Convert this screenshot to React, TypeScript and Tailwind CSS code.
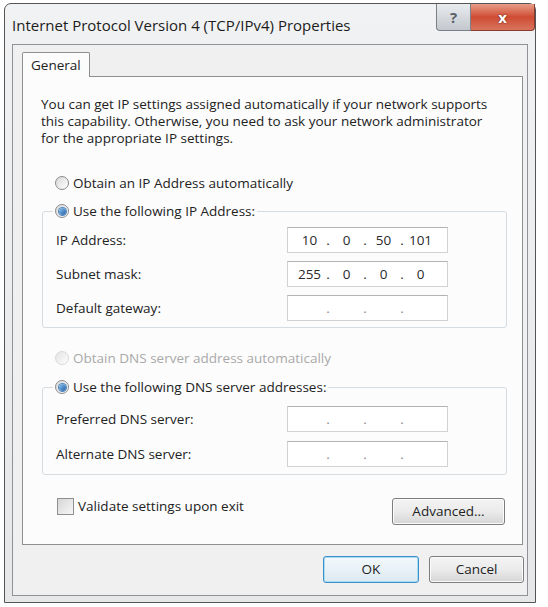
import type { ReactNode } from "react";

const font = { fontFamily: '"Open Sans", "Noto Sans", sans-serif' };

function Radio({ checked = false, disabled = false }: { checked?: boolean; disabled?: boolean }) {
  return (
    <span
      className={`flex h-[14px] w-[14px] shrink-0 items-center justify-center rounded-full border bg-gradient-to-br from-[#d9d9d9] to-[#ffffff] ${
        disabled ? "border-[#cbcbcb] opacity-70" : "border-[#8a8a8a]"
      }`}
    >
      {checked && (
        <span className="h-[7px] w-[7px] rounded-full bg-gradient-to-br from-[#8fc4ee] to-[#1d5fa6] shadow-[0_0_0_1px_#4f86bd]" />
      )}
    </span>
  );
}

function IpField({ values }: { values: string[] }) {
  const empty = values.every((v) => v === "");
  return (
    <div className="flex h-[26px] w-[161px] items-center border border-[#d2d2d2] border-t-[#b3b3b3] bg-white pl-[5px] text-[13.5px] text-[#2a2a2a]">
      {values.map((v, i) => (
        <div key={i} className="flex items-center">
          <span className="w-[33px] text-center">{v}</span>
          {i < 3 && (
            <span className={`w-[4px] text-center ${empty ? "text-[#8a8a8a]" : ""}`}>.</span>
          )}
        </div>
      ))}
    </div>
  );
}

function Row({ label, values }: { label: string; values: string[] }) {
  return (
    <div className="flex items-center">
      <span className="w-[244px] pl-[13px] text-[13.5px] text-[#222]">{label}</span>
      <IpField values={values} />
    </div>
  );
}

function Group({ legend, children }: { legend: ReactNode; children: ReactNode }) {
  return (
    <fieldset className="ml-[19px] w-[465px] rounded-[3px] border border-[#d5dce2]">
      <legend className="ml-[10px] px-[2px]">{legend}</legend>
      {children}
    </fieldset>
  );
}

function Btn({ children, primary = false, className = "" }: { children: ReactNode; primary?: boolean; className?: string }) {
  return (
    <button
      className={`flex h-[27px] items-center justify-center rounded-[3px] border text-[13.5px] text-[#222] ${
        primary
          ? "border-[#3d8fc8] bg-gradient-to-b from-[#f3f9fc] to-[#dce9f1] shadow-[inset_0_0_0_1px_#a9dcf5]"
          : "border-[#7d7d7d] bg-gradient-to-b from-[#f4f4f4] via-[#ebebeb] to-[#d5d5d5] shadow-[inset_0_0_0_1px_#fbfbfb]"
      } ${className}`}
    >
      {children}
    </button>
  );
}

export default function App() {
  return (
    <div className="h-[607px] w-[548px] bg-white pl-[4px] pt-[3px]" style={font}>
      <div className="flex h-[600px] w-[532px] flex-col rounded-t-[7px] border border-[#555] bg-gradient-to-b from-[#f1f2f3] to-[#e6e7e8]">
        {/* title bar */}
        <div className="flex h-[40px] items-start">
          <span className="mt-[11px] flex-1 pl-[7px] text-[15px] leading-[20px] text-[#1c1c1c]">
            Internet Protocol Version 4 (TCP/IPv4) Properties
          </span>
          <div className="flex">
            <div className="flex h-[27px] w-[35px] items-center justify-center rounded-bl-[4px] border border-t-0 border-[#7b8087] bg-gradient-to-b from-[#e9ecef] to-[#c3c8ce] text-[15px] font-bold text-[#5b6068]">
              ?
            </div>
            <div className="flex h-[27px] w-[64px] items-center justify-center rounded-br-[4px] border border-l-0 border-t-0 border-[#8a3a2c] bg-gradient-to-b from-[#e79b88] via-[#cf4b33] to-[#d8735d] text-[15px] font-bold text-white [text-shadow:0_0_2px_#5a1a10]">
              x
            </div>
          </div>
        </div>

        {/* client area */}
        <div className="mx-[7px] flex h-[552px] flex-col border border-[#8f9296] bg-[#f0f0f0]">
          <div className="pl-[9px] pt-[7px]">
            <div className="relative z-10 -mb-px flex h-[25px] w-[68px] items-center rounded-t-[2px] border border-b-0 border-[#8e8f8f] bg-[#fcfcfc] pl-[8px] text-[13.5px] text-[#222]">
              General
            </div>
          </div>

          <div className="ml-[9px] mr-[4px] h-[469px] border border-[#8e8f8f] bg-[#fcfcfc]">
            <div className="pl-[18px] pt-[19px] text-[13.5px] leading-[17px] text-[#222]">
              <div className="whitespace-nowrap">You can get IP settings assigned automatically if your network supports</div>
              <div className="whitespace-nowrap">this capability. Otherwise, you need to ask your network administrator</div>
              <div className="whitespace-nowrap">for the appropriate IP settings.</div>
            </div>

            <div className="ml-[32px] mt-[27px] flex h-[18px] items-center gap-[4px] text-[13.5px] text-[#222]">
              <Radio />
              <span>Obtain an IP Address automatically</span>
            </div>

            <div className="mt-[10px]">
              <Group
                legend={
                  <span className="flex h-[18px] items-center gap-[4px] text-[13.5px] text-[#222]">
                    <Radio checked />
                    <span>Use the following IP Address:</span>
                  </span>
                }
              >
                <div className="mt-[7px] flex flex-col gap-[8px] pb-[6px]">
                  <Row label="IP Address:" values={["10", "0", "50", "101"]} />
                  <Row label="Subnet mask:" values={["255", "0", "0", "0"]} />
                  <Row label="Default gateway:" values={["", "", "", ""]} />
                </div>
              </Group>
            </div>

            <div className="ml-[32px] mt-[21px] flex h-[18px] items-center gap-[4px] text-[13.5px] text-[#a9a9a9]">
              <Radio disabled />
              <span>Obtain DNS server address automatically</span>
            </div>

            <div className="mt-[11px]">
              <Group
                legend={
                  <span className="flex h-[18px] items-center gap-[4px] text-[13.5px] text-[#222]">
                    <Radio checked />
                    <span>Use the following DNS server addresses:</span>
                  </span>
                }
              >
                <div className="mt-[10px] flex flex-col gap-[9px] pb-[7px]">
                  <Row label="Preferred DNS server:" values={["", "", "", ""]} />
                  <Row label="Alternate DNS server:" values={["", "", "", ""]} />
                </div>
              </Group>
            </div>

            <div className="mt-[22px] flex items-start justify-between pl-[34px] pr-[17px]">
              <div className="flex h-[18px] items-center gap-[4px] text-[13.5px] text-[#222]">
                <span className="h-[17px] w-[17px] border border-[#8f8f8f] bg-gradient-to-br from-[#d6d6d6] to-[#f7f7f7]" />
                <span>Validate settings upon exit</span>
              </div>
              <Btn className="mt-[1px] w-[113px]">Advanced...</Btn>
            </div>
          </div>

          <div className="mr-[3px] mt-[11px] flex justify-end gap-[10px]">
            <Btn primary className="w-[96px]">OK</Btn>
            <Btn className="w-[95px]">Cancel</Btn>
          </div>
        </div>
      </div>
    </div>
  );
}
